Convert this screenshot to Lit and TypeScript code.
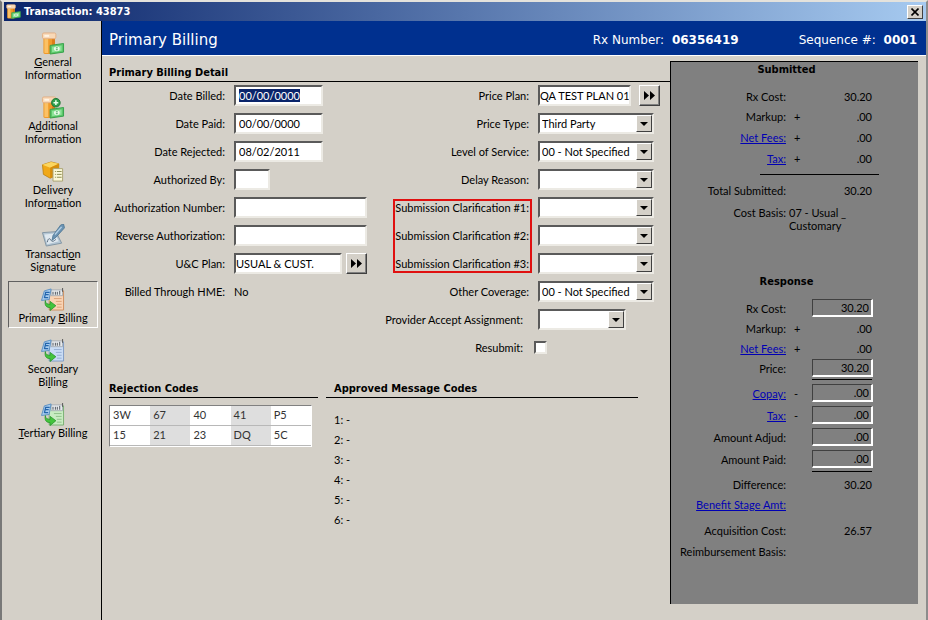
import { LitElement, html, svg, css, nothing, TemplateResult } from "lit";
import { customElement, query } from "lit/decorators.js";
import { classMap } from "lit/directives/class-map.js";

const bottle = svg`
  <path d="M2 6 H14 V21 Q14 23 12 23 H4 Q2 23 2 21 Z" fill="#f09a2a"/>
  <path d="M3 6 H7 V22 H4 Q3 22 3 21 Z" fill="#fbc164"/>
  <rect x="11" y="6" width="3" height="16" fill="#dd7c18"/>
  <rect x="1" y="1" width="14" height="6" rx="1.500" fill="#f8d9b8" stroke="#e3b083"/>
  <path d="M3 4 H8" stroke="#fff4e6" stroke-width="2"/>`;

const money = svg`
  <path d="M9 14 L23 12 L23 21 L9 23 Z" fill="#5cc86a" stroke="#35a04b"/>
  <path d="M11 15.500 L21 14 L21 19.500 L11 21 Z" fill="#8ee39a"/>
  <ellipse cx="16" cy="17.500" rx="3" ry="2.500" fill="#e9fbe8"/>
  <path d="M15 16.500 h2 M15 18.500 h2" stroke="#3fa556"/>`;

const claim = (paper: string, edge: string) => svg`
  <path d="M8 3 H23 V23 H8 Z" fill="${paper}" stroke="${edge}"/>
  <path d="M10 2 h12 v6 h-12 z" fill="#e6e9ec" stroke="#9aa2aa" stroke-width=".8"/>
  <path d="M12 4 v3 M14.500 4 v3 M16.500 4 v3 M19 3 v4" stroke="#4f565e"/>
  <path d="M22 0 v4" stroke="#555"/>
  <path d="M13 11 h8 M15 14 h6 M16 17 h5 M16 20 h5" stroke="${edge}" opacity=".7"/>
  <path d="M3 3 L10 1 L8 12 L0 13 Z" fill="#a9cdee" stroke="#5b90c4"/>
  <path d="M4.500 4.500 h4 M4 7 h3.500 M3 10 h4 M4.500 4 L3 10.500" stroke="#2466ad" stroke-width="1.300" fill="none"/>
  <path d="M4 13 C4 16 6 17 9 17 V14 L15 18.500 L9 23.500 V20.500 C5 20.500 3 18 4 13 Z" fill="#43c43c" stroke="#249129" stroke-width=".8"/>`;

const icons: Record<string, TemplateResult> = {
  general: svg`${bottle}${money}`,
  additional: svg`${bottle}${money}
    <circle cx="15" cy="7" r="4.500" fill="#2f9e4c" stroke="#1c7434"/>
    <path d="M15 4.500 v5 M12.500 7 h5" stroke="#e6ffe9" stroke-width="1.600"/>`,
  delivery: svg`
    <path d="M1 5 L10 2 L18 4 V15 L9 19 L2 15 Z" fill="#f0a818" stroke="#b97d0c" stroke-width=".8"/>
    <path d="M1 5 L10 2 L18 4 L9 8 Z" fill="#fbd660"/>
    <path d="M9 8 L18 4 V15 L9 19 Z" fill="#d58d0c"/>
    <path d="M12 9 H22 V22 H12 Z" fill="#fbf8d8" stroke="#a9a372"/>
    <path d="M14 12 h1 M16 12 h5 M14 15 h1 M16 15 h5 M14 18 h1 M16 18 h5" stroke="#8a8a4c"/>`,
  signature: svg`
    <path d="M1 9 L15 8 L21 20 L5 23 Z" fill="#b4c6d4" stroke="#8194a3"/>
    <path d="M3 11 L14 10 L18 18 L6 21 Z" fill="#dfe8ef"/>
    <path d="M6 19 C7 14 9 15 10 17 S13 18 15 16" fill="none" stroke="#56697a"/>
    <path d="M11 17 L12 12 L20 1 L23 0 L24 4 L15 14 Z" fill="#6b93b3" stroke="#46708f" stroke-width=".8"/>
    <path d="M14 11 L21 3" stroke="#b4d0e6" stroke-width="1.400"/>`,
  primary: claim("#f9d3b4", "#cf8f60"),
  secondary: claim("#c9dcf5", "#7f9cc4"),
  tertiary: claim("#c8ecc2", "#78b072"),
};

interface NavItem { icon: string; label: TemplateResult; active?: boolean }
const navItems: NavItem[] = [
  { icon: "general", label: html`<u>G</u>eneral<br>Information` },
  { icon: "additional", label: html`A<u>d</u>ditional<br>Information` },
  { icon: "delivery", label: html`Delivery<br>Infor<u>m</u>ation` },
  { icon: "signature", label: html`Transacti<u>o</u>n<br>Signature` },
  { icon: "primary", label: html`Primary <u>B</u>illing`, active: true },
  { icon: "secondary", label: html`Secondary<br>Bi<u>l</u>ling` },
  { icon: "tertiary", label: html`<u>T</u>ertiary Billing` },
];

interface Amount {
  id: string; label: string; sign?: string; value?: string;
  link?: boolean; boxed?: boolean; tall?: boolean; rule?: boolean; apart?: boolean;
}
const submitted: Amount[] = [
  { id: "s-cost", label: "Rx Cost:", value: "30.20" },
  { id: "s-markup", label: "Markup:", sign: "+", value: ".00" },
  { id: "s-fees", label: "Net Fees:", sign: "+", value: ".00", link: true, tall: true },
  { id: "s-tax", label: "Tax:", sign: "+", value: ".00", link: true },
];
const response: Amount[] = [
  { id: "r-cost", label: "Rx Cost:", value: "30.20", boxed: true },
  { id: "r-markup", label: "Markup:", sign: "+", value: ".00" },
  { id: "r-fees", label: "Net Fees:", sign: "+", value: ".00", link: true },
  { id: "r-price", label: "Price:", value: "30.20", boxed: true, rule: true },
  { id: "r-copay", label: "Copay:", sign: "-", value: ".00", link: true, boxed: true, tall: true },
  { id: "r-tax", label: "Tax:", sign: "-", value: ".00", link: true, boxed: true, tall: true },
  { id: "r-adjud", label: "Amount Adjud:", value: ".00", boxed: true, tall: true },
  { id: "r-paid", label: "Amount Paid:", value: ".00", boxed: true, tall: true, rule: true },
  { id: "r-diff", label: "Difference:", value: "30.20" },
  { id: "r-stage", label: "Benefit Stage Amt:", link: true },
  { id: "r-acq", label: "Acquisition Cost:", value: "26.57", apart: true },
  { id: "r-basis", label: "Reimbursement Basis:", tall: true },
];

const rejectionCodes = [
  ["3W", "67", "40", "41", "P5"],
  ["15", "21", "23", "DQ", "5C"],
];

@customElement("app-root")
export class AppRoot extends LitElement {
  @query("#date-billed") private dateBilled!: HTMLInputElement;

  static styles = css`
    :host {
      display: flex; flex-direction: column; min-height: 100vh; box-sizing: border-box;
      background: #d4d0c8; color: #000; padding-left: 2px;
      border-left: 2px solid #787878; border-right: 2px solid #8c8c8c;
      border-top: 2px solid #e4e2dc;
      font: 11px/13px Lato, Tahoma, sans-serif;
    }
    * { box-sizing: border-box; }
    h1, h2, p { margin: 0; font: inherit; }
    button, input, select { font: inherit; color: inherit; margin: 0; border-radius: 0; }
    svg { display: block; }

    .titlebar, .heading, .group {
      font-family: "DejaVu Sans Condensed", Tahoma, sans-serif; font-weight: bold;
    }
    .titlebar {
      display: flex; align-items: center; height: 19px; padding: 0 3px 0 2px; gap: 3px;
      background: linear-gradient(90deg, #0a246a, #a6caf0); color: #fff;
    }
    .titlebar h1 { flex: 1; }
    .close {
      display: grid; place-items: center; width: 16px; height: 14px; padding: 0;
      background: #d4d0c8; border: 1px solid; border-color: #fff #404040 #404040 #fff;
    }

    .body { flex: 1; display: flex; }
    nav {
      flex: 0 0 98px; display: flex; flex-direction: column; gap: 4px;
      padding: 4px 3px 0 4px; border-right: 1px solid #000;
    }
    .nav-item {
      display: flex; flex-direction: column; align-items: center;
      padding: 6px 0 3px; background: none; border: 1px solid transparent;
      text-align: center; white-space: nowrap;
    }
    .nav-item svg { height: 23px; }
    .nav-item.active { border-color: #606060 #fff #fff #606060; }

    .page { flex: 1; min-width: 0; display: flex; flex-direction: column; }
    header {
      display: flex; align-items: center; height: 35px; padding: 3px 9px 0 7px;
      background: #00308f; border-bottom: 1px solid #fff; color: #fff;
      font: 12px/16px "DejaVu Sans", Verdana, sans-serif;
    }
    header h2 { flex: 1; font-size: 15px; }
    header strong { margin-left: 4px; }
    .rx { margin-right: 60px; }
    .columns { flex: 1; display: flex; align-items: stretch; }
    main { flex: 1; min-width: 0; padding: 10px 0 0 7px; }
    .heading { height: 16px; border-bottom: 1px solid #000; }

    .forms { display: flex; gap: 17px; margin-top: 3px; }
    .form {
      display: grid; grid-auto-rows: 21px; row-gap: 7px; column-gap: 9px;
      grid-template-columns: 116px 133px; align-items: center; align-content: start;
    }
    .form.second { grid-template-columns: 145px 124px; }
    .form label, .form .caption { grid-column: 1; text-align: right; white-space: nowrap; }
    .form .early { padding-right: 6px; }
    .cell { grid-column: 2; display: flex; align-items: center; }
    .text {
      height: 21px; min-width: 0; padding: 0; background: #fff; outline: 0;
      border: 2px solid; border-color: #5a5a5a #eceae4 #eceae4 #5a5a5a;
    }
    .text::selection { background: #0a246a; color: #fff; }
    .date { width: 89px; padding-left: 3px; }
    .initials { width: 36px; }
    .full { width: 133px; }
    .plan { width: 108px; margin-right: 4px; }
    .price { width: 93px; margin-right: 8px; }
    .go {
      display: grid; place-items: center; width: 21px; height: 21px; padding: 0;
      background: #d4d0c8; border: 1px solid; border-color: #fff #404040 #404040 #fff;
      box-shadow: inset -1px -1px #808080;
    }
    .combo { display: grid; width: 116px; height: 21px; }
    .combo.short { width: 88px; }
    .combo select {
      grid-area: 1 / 1; appearance: none; width: 100%; padding: 0 18px 0 2px;
      background: #fff; outline: 0; border: 2px solid;
      border-color: #5a5a5a #eceae4 #eceae4 #5a5a5a;
    }
    .arrow {
      grid-area: 1 / 1; justify-self: end; align-self: center; margin-right: 2px;
      display: grid; place-items: center; width: 16px; height: 17px; pointer-events: none;
      background: #d4d0c8; border: 1px solid; border-color: #fff #404040 #404040 #fff;
    }
    .marker {
      grid-row: 5 / 8; grid-column: 1; justify-self: end; align-self: stretch;
      width: 139px; margin: 2px -3px 1px 0; border: 2px solid #e01010; pointer-events: none;
    }
    .row5 { grid-row: 5; } .row6 { grid-row: 6; } .row7 { grid-row: 7; }
    .tick {
      appearance: none; width: 13px; height: 13px; margin-left: -4px; background: #fff;
      border: 2px solid; border-color: #5a5a5a #eceae4 #eceae4 #5a5a5a;
    }
    .tick:checked { background: #000; }

    .lists { display: flex; gap: 8px; margin-top: 24px; }
    .rejections { width: 209px; }
    .approved { width: 312px; }
    .approved .heading { padding-left: 8px; }
    table {
      margin-top: 7px; border-collapse: separate; border-spacing: 0; table-layout: fixed;
      width: 203px; color: #333; border: 1px solid; border-color: #808080 #fff #fff #808080;
    }
    td { height: 20px; padding: 0 3px 2px; background: #fff; border-bottom: 1px solid #b8b8b8; }
    td:nth-child(even) { background: #dedede; }
    ol { list-style: none; margin: 12px 0 0; padding: 0 0 0 8px; line-height: 20px; }

    aside {
      flex: 0 0 248px; margin: 5px 8px 16px 0; background: #808080;
      border-left: 1px solid #000; border-top: 1px solid #000;
    }
    .group { text-align: center; padding: 1px 16px 10px 0; }
    .group.later { padding-top: 43px; }
    .amount {
      display: grid; grid-template-columns: 115px 26px 60px; align-items: center; height: 20px;
    }
    .amount.tall { height: 22px; }
    .amount.apart { margin-top: 6px; }
    .amount .name { text-align: right; white-space: nowrap; }
    .amount .sign { padding-left: 8px; }
    .amount .value { text-align: right; }
    .amount input {
      width: 61px; height: 18px; padding: 0 2px; text-align: right; background: #808080;
      outline: 0; border: 1px solid; border-color: #404040 #fff #fff #404040;
      border-right-width: 2px; border-bottom-width: 2px;
    }
    a { color: #0000b4; }
    .rule { height: 1px; margin: 1px 0 2px 141px; width: 60px; background: #000; }
    .sum { height: 1px; margin: 6px 0 5px 89px; width: 119px; background: #000; }
    .basis { display: grid; grid-template-columns: 115px auto; column-gap: 3px; margin-top: 6px; }
    .basis span:first-child { text-align: right; }
  `;

  firstUpdated() {
    this.dateBilled.focus();
    this.dateBilled.select();
  }

  private textField(id: string, label: string, size: string, value = "", go?: string) {
    return html`
      <label for=${id}>${label}</label>
      <div class="cell">
        <input id=${id} class="text ${size}" type="text" .value=${value}>
        ${go ? html`<button class="go" type="button" aria-label=${go}>
          <svg width="13" height="11" viewBox="0 0 13 11"><path d="M1 1 L6 5.500 L1 10 Z M7 1 L12 5.500 L7 10 Z"/></svg>
        </button>` : nothing}
      </div>`;
  }

  private combo(id: string, label: string, value = "", row = "", short = false) {
    return html`
      <label for=${id} class=${classMap({ [row || "auto"]: true, early: short })}>${label}</label>
      <div class="cell ${row}">
        <div class=${classMap({ combo: true, short })}>
          <select id=${id}><option>${value}</option></select>
          <span class="arrow"><svg width="8" height="4" viewBox="0 0 8 4"><path d="M0 0 H8 L4 4 Z"/></svg></span>
        </div>
      </div>`;
  }

  private amount(a: Amount) {
    const name = a.link ? html`<a href="#${a.id}">${a.label}</a>`
      : a.boxed ? html`<label for=${a.id}>${a.label}</label>` : a.label;
    return html`
      <div class=${classMap({ amount: true, tall: !!a.tall, apart: !!a.apart })}>
        <span class="name">${name}</span>
        <span class="sign">${a.sign ?? ""}</span>
        ${a.boxed
          ? html`<input id=${a.id} type="text" readonly aria-label=${a.label} .value=${a.value ?? ""}>`
          : html`<span class="value">${a.value ?? ""}</span>`}
      </div>
      ${a.rule ? html`<div class="rule"></div>` : nothing}`;
  }

  render() {
    return html`
      <div class="titlebar">
        <svg width="15" height="15" viewBox="0 0 24 24">${icons.general}</svg>
        <h1>Transaction: 43873</h1>
        <button class="close" type="button" aria-label="Close">
          <svg width="8" height="8" viewBox="0 0 8 8"><path d="M0.500 0.500 L7.500 7.500 M7.500 0.500 L0.500 7.500" stroke="#000" stroke-width="1.600"/></svg>
        </button>
      </div>
      <div class="body">
        <nav>
          ${navItems.map((n) => html`
            <button type="button" class=${classMap({ "nav-item": true, active: !!n.active })}>
              <svg width="24" height="24" viewBox="0 0 24 24">${icons[n.icon]}</svg>
              <span>${n.label}</span>
            </button>`)}
        </nav>
        <div class="page">
          <header>
            <h2>Primary Billing</h2>
            <span class="rx">Rx Number: <strong>06356419</strong></span>
            <span>Sequence #: <strong>0001</strong></span>
          </header>
          <div class="columns">
            <main>
              <h2 class="heading">Primary Billing Detail</h2>
              <div class="forms">
                <div class="form">
                  ${this.textField("date-billed", "Date Billed:", "date", "00/00/0000")}
                  ${this.textField("date-paid", "Date Paid:", "date", "00/00/0000")}
                  ${this.textField("date-rejected", "Date Rejected:", "date", "08/02/2011")}
                  ${this.textField("authorized-by", "Authorized By:", "initials")}
                  ${this.textField("auth-number", "Authorization Number:", "full")}
                  ${this.textField("reverse-auth", "Reverse Authorization:", "full")}
                  ${this.textField("uc-plan", "U&C Plan:", "plan", "USUAL & CUST.", "Choose U&C plan")}
                  <span class="caption">Billed Through HME:</span><span class="cell">No</span>
                </div>
                <div class="form second">
                  ${this.textField("price-plan", "Price Plan:", "price", "QA TEST PLAN 01", "Choose price plan")}
                  ${this.combo("price-type", "Price Type:", "Third Party")}
                  ${this.combo("service-level", "Level of Service:", "00 - Not Specified")}
                  ${this.combo("delay-reason", "Delay Reason:")}
                  ${this.combo("clarification-1", "Submission Clarification #1:", "", "row5")}
                  ${this.combo("clarification-2", "Submission Clarification #2:", "", "row6")}
                  ${this.combo("clarification-3", "Submission Clarification #3:", "", "row7")}
                  <div class="marker"></div>
                  ${this.combo("other-coverage", "Other Coverage:", "00 - Not Specified")}
                  ${this.combo("accept-assignment", "Provider Accept Assignment:", "", "", true)}
                  <label class="early" for="resubmit">Resubmit:</label>
                  <div class="cell"><input id="resubmit" class="tick" type="checkbox"></div>
                </div>
              </div>
              <div class="lists">
                <section class="rejections">
                  <h2 class="heading">Rejection Codes</h2>
                  <table>
                    <tbody>${rejectionCodes.map((r) => html`<tr>${r.map((c) => html`<td>${c}</td>`)}</tr>`)}</tbody>
                  </table>
                </section>
                <section class="approved">
                  <h2 class="heading">Approved Message Codes</h2>
                  <ol>${[1, 2, 3, 4, 5, 6].map((n) => html`<li>${n}: -</li>`)}</ol>
                </section>
              </div>
            </main>
            <aside>
              <h2 class="group">Submitted</h2>
              ${submitted.map((a) => this.amount(a))}
              <div class="sum"></div>
              ${this.amount({ id: "s-total", label: "Total Submitted:", value: "30.20" })}
              <p class="basis"><span>Cost Basis:</span><span>07 - Usual _<br>Customary</span></p>
              <h2 class="group later">Response</h2>
              ${response.map((a) => this.amount(a))}
            </aside>
          </div>
        </div>
      </div>`;
  }
}
